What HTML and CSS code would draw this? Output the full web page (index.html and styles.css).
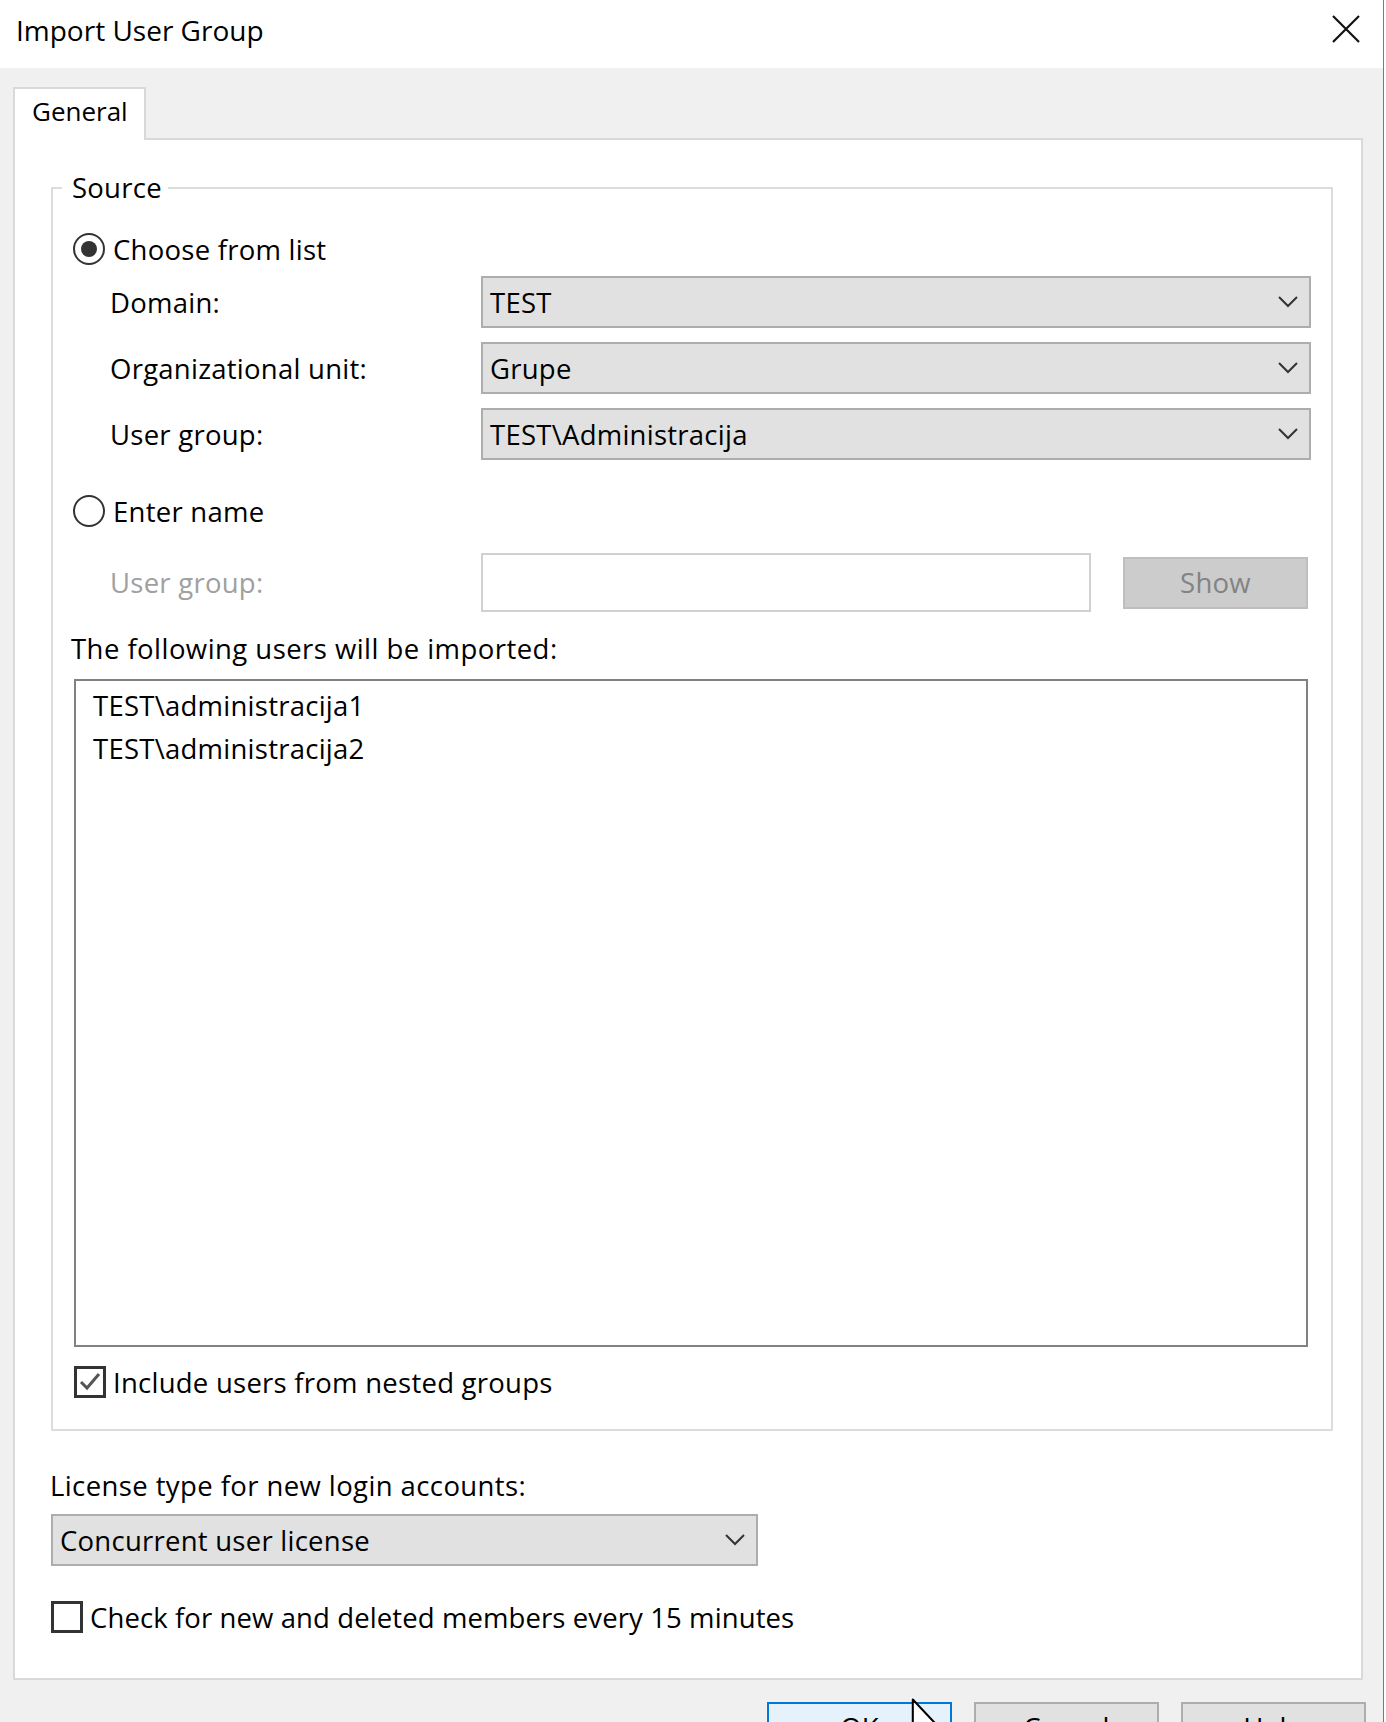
FILE: index.html
```html
<!DOCTYPE html>
<html>
<head>
<meta charset="utf-8">
<link rel="stylesheet" href="styles.css">
</head>
<body>
<div class="dialog">
  <div class="titlebar">
    <span class="title">Import User Group</span>
    <svg class="close" width="28" height="28" viewBox="0 0 28 28"><path d="M1 1 L27 27 M27 1 L1 27" stroke="#111" stroke-width="2.2" fill="none"/></svg>
  </div>
  <div class="body">
    <div class="tabs"><div class="tab">General</div></div>
    <div class="panel">
      <div class="group">
        <div class="legend">Source</div>
        <div class="row radio-row r1"><span class="radio checked"></span><span class="rtext">Choose from list</span></div>
        <div class="row field f1">
          <span class="label">Domain:</span>
          <div class="combo"><span>TEST</span><svg class="chev" width="20" height="12" viewBox="0 0 20 12"><polyline points="1,1 10,10 19,1" fill="none" stroke="#333" stroke-width="2"/></svg></div>
        </div>
        <div class="row field f2">
          <span class="label">Organizational unit:</span>
          <div class="combo"><span>Grupe</span><svg class="chev" width="20" height="12" viewBox="0 0 20 12"><polyline points="1,1 10,10 19,1" fill="none" stroke="#333" stroke-width="2"/></svg></div>
        </div>
        <div class="row field f2">
          <span class="label">User group:</span>
          <div class="combo"><span>TEST\Administracija</span><svg class="chev" width="20" height="12" viewBox="0 0 20 12"><polyline points="1,1 10,10 19,1" fill="none" stroke="#333" stroke-width="2"/></svg></div>
        </div>
        <div class="row radio-row r2"><span class="radio"></span><span class="rtext">Enter name</span></div>
        <div class="row field f3">
          <span class="label disabled">User group:</span>
          <div class="textbox"></div>
          <div class="showbtn">Show</div>
        </div>
        <div class="caption">The following users will be imported:</div>
        <div class="listbox">
          <div class="item">TEST\administracija1</div>
          <div class="item">TEST\administracija2</div>
        </div>
        <div class="row check-row c1">
          <span class="checkbox"><svg width="26" height="26" viewBox="0 0 26 26"><polyline points="4,13 10,19 22,5" fill="none" stroke="#555" stroke-width="3"/></svg></span>
          <span class="ctext">Include users from nested groups</span>
        </div>
      </div>
      <div class="lic-label">License type for new login accounts:</div>
      <div class="combo lic"><span>Concurrent user license</span><svg class="chev" width="20" height="12" viewBox="0 0 20 12"><polyline points="1,1 10,10 19,1" fill="none" stroke="#333" stroke-width="2"/></svg></div>
      <div class="row check-row c2">
        <span class="checkbox"></span>
        <span class="ctext">Check for new and deleted members every 15 minutes</span>
      </div>
    </div>
    <div class="buttons">
      <div class="btn primary">OK</div>
      <div class="btn">Cancel</div>
      <div class="btn">Help</div>
    </div>
  </div>
</div>
<svg class="cursor" width="30" height="44" viewBox="0 0 20 30"><path d="M1 1 L1 23 L6 18 L10 27 L13 26 L9 17 L16 17 Z" fill="#fff" stroke="#000" stroke-width="1.4" stroke-linejoin="round"/></svg>
</body>
</html>
```
FILE: styles.css
```css
html, body {
  margin: 0;
  padding: 0;
  height: 1722px;
  overflow: hidden;
  background: #ffffff;
}
body {
  font-family: "Open Sans", "Noto Sans", sans-serif;
  font-size: 27.5px;
  letter-spacing: 0.25px;
  color: #000;
  position: relative;
}
.dialog {
  width: 1383px;
  height: 1722px;
  border-right: 1px solid #7a7a7a;
  background: #f0f0f0;
  box-sizing: content-box;
}
.titlebar {
  height: 68px;
  background: #ffffff;
  display: flex;
  justify-content: space-between;
  align-items: flex-start;
}
.title {
  font-size: 28px;
  letter-spacing: 0;
  line-height: 60px;
  padding-left: 16px;
}
.close {
  margin-top: 15px;
  margin-right: 23px;
}
.body {
  padding-top: 19px;
}
.tabs {
  display: flex;
  padding-left: 13px;
}
.tab {
  position: relative;
  z-index: 1;
  width: 133px;
  box-sizing: border-box;
  border: 2px solid #d9d9d9;
  border-bottom: none;
  background: #fff;
  margin-bottom: -2px;
  height: 53px;
  padding-left: 17px;
  line-height: 44px;
  font-size: 26px;
  letter-spacing: 0;
}
.panel {
  margin-left: 13px;
  width: 1350px;
  box-sizing: border-box;
  border: 2px solid #d9d9d9;
  background: #fff;
  padding: 47px 28px 43px 36px;
}
.group {
  border: 2px solid #dcdcdc;
  padding: 0 20px 29px 20px;
}
.legend {
  width: fit-content;
  margin-top: -19px;
  margin-left: -11px;
  padding: 0 6px 0 10px;
  line-height: 36px;
  background: #fff;
}
.row {
  display: flex;
  align-items: center;
}
.radio-row {
  height: 40px;
  gap: 8px;
}
.r1 { margin-top: 23px; }
.r2 { margin-top: 31px; }
.radio {
  width: 32px;
  height: 32px;
  box-sizing: border-box;
  border: 2.5px solid #333;
  border-radius: 50%;
  display: flex;
  align-items: center;
  justify-content: center;
  flex: none;
}
.radio.checked::after {
  content: "";
  width: 16px;
  height: 16px;
  border-radius: 50%;
  background: #333;
}
.field .label {
  width: 408px;
  flex: none;
  box-sizing: border-box;
  padding-left: 37px;
}
.label.disabled { color: #a0a0a0; }
.f1 { margin-top: 7px; }
.f2 { margin-top: 14px; }
.f3 { margin-top: 22px; height: 59px; }
.combo {
  flex: 1;
  height: 52px;
  box-sizing: border-box;
  border: 2px solid #adadad;
  background: #e1e1e1;
  display: flex;
  align-items: center;
  justify-content: space-between;
  padding: 0 11px 0 7px;
}
.textbox {
  width: 610px;
  height: 59px;
  box-sizing: border-box;
  border: 2px solid #d0d0d0;
  background: #fff;
  flex: none;
}
.showbtn {
  width: 185px;
  height: 52px;
  box-sizing: border-box;
  margin-left: 32px;
  margin-right: 3px;
  border: 2px solid #bfbfbf;
  background: #cccccc;
  color: #838383;
  display: flex;
  align-items: center;
  justify-content: center;
  flex: none;
}
.caption {
  margin-top: 19px;
  line-height: 36px;
  margin-left: -2px;
  letter-spacing: 0.45px;
}
.listbox {
  margin-top: 12px;
  margin-left: 1px;
  margin-right: 3px;
  height: 668px;
  box-sizing: border-box;
  border: 2px solid #828282;
  padding: 3px 0 0 17px;
}
.item { line-height: 43px; }
.check-row {
  height: 36px;
  gap: 7px;
}
.c1 { margin-top: 17px; margin-left: 1px; }
.c2 { margin-top: 33px; }
.c2 .ctext { letter-spacing: 0.1px; }
.checkbox {
  width: 32px;
  height: 32px;
  box-sizing: border-box;
  border: 3px solid #333;
  background: #fff;
  flex: none;
  display: flex;
  align-items: center;
  justify-content: center;
}
.lic-label {
  margin-top: 37px;
  line-height: 36px;
  margin-left: -1px;
  letter-spacing: 0.4px;
}
.combo.lic {
  margin-top: 10px;
  width: 707px;
  flex: none;
}
.buttons {
  display: flex;
  justify-content: flex-end;
  gap: 22px;
  margin-top: 22px;
  padding-right: 17px;
}
.btn {
  width: 185px;
  height: 50px;
  box-sizing: border-box;
  border: 2px solid #adadad;
  background: #e1e1e1;
  display: flex;
  align-items: center;
  justify-content: center;
}
.btn.primary {
  border-color: #0078d7;
  background: #e5f1fb;
}
.cursor {
  position: absolute;
  left: 911px;
  top: 1698px;
}
```
